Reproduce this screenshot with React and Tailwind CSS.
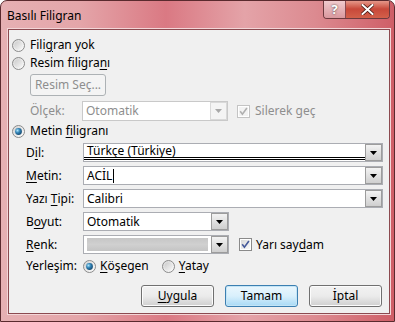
import React from 'react';

const font = { fontFamily: '"Noto Sans", "Open Sans", sans-serif' };

// mnemonic underline
const U = ({ children }) => <span className="underline underline-offset-[2px] decoration-[1px]">{children}</span>;

const Radio = ({ checked }) => (
  <svg width="13" height="13" viewBox="0 0 13 13" className="shrink-0">
    <defs>
      <linearGradient id="rOuter" x1="0" y1="0" x2="1" y2="1">
        <stop offset="0" stopColor="#d6d6d6" />
        <stop offset="1" stopColor="#ffffff" />
      </linearGradient>
      <linearGradient id="rInner" x1="0" y1="0" x2="1" y2="1">
        <stop offset="0" stopColor="#cbcbcb" />
        <stop offset="1" stopColor="#f7f7f7" />
      </linearGradient>
      <radialGradient id="rDot" cx="0.35" cy="0.35" r="0.7">
        <stop offset="0" stopColor="#a9e4fb" />
        <stop offset="0.5" stopColor="#2f80b3" />
        <stop offset="1" stopColor="#174a70" />
      </radialGradient>
    </defs>
    <circle cx="6.5" cy="6.5" r="6" fill="url(#rOuter)" stroke="#8a8a8a" />
    <circle cx="6.5" cy="6.5" r="4.2" fill="url(#rInner)" />
    {checked && <circle cx="6.5" cy="6.5" r="3.4" fill="url(#rDot)" />}
  </svg>
);

const Check = ({ disabled }) => (
  <svg width="13" height="13" viewBox="0 0 13 13" className="shrink-0">
    <defs>
      <linearGradient id="cInner" x1="0" y1="0" x2="1" y2="1">
        <stop offset="0" stopColor="#d8d8d8" />
        <stop offset="1" stopColor="#f9f9f9" />
      </linearGradient>
    </defs>
    <rect x="0.5" y="0.5" width="12" height="12" fill="#fff" stroke={disabled ? '#c4c4c4' : '#8a8a8a'} />
    <rect x="2" y="2" width="9" height="9" fill={disabled ? '#f3f3f3' : 'url(#cInner)'} />
    <path d="M3.2 6.3 L5.4 9.2 L9.9 3" fill="none" stroke={disabled ? '#b0b0b0' : '#45599a'} strokeWidth="1.6" />
  </svg>
);

const Arrow = ({ disabled }) => (
  <div
    className={`w-[17px] h-full shrink-0 flex items-center justify-center border ${
      disabled ? 'border-[#d9d9d9] bg-[#f4f4f4]' : 'border-[#9c9c9c] bg-gradient-to-b from-[#f3f3f3] to-[#cfcfcf]'
    }`}
  >
    <svg width="7" height="4" viewBox="0 0 7 4">
      <path d="M0 0 H7 L3.5 4 Z" fill={disabled ? '#a8a8a8' : '#000'} />
    </svg>
  </div>
);

const Combo = ({ width, disabled, children, underline }) => (
  <div
    className={`flex h-full bg-white border ${disabled ? 'border-[#c9c9c9] text-[#8e8e8e]' : 'border-[#abadb3]'}`}
    style={{ width }}
  >
    <div className="flex-1 min-w-0 flex flex-col">
      <div className="flex-1 flex items-center pl-[3px] leading-none">{children}</div>
      {underline && <div className="h-[3px] border-b-[3px] border-double border-black mb-[1px]" />}
    </div>
    <Arrow disabled={disabled} />
  </div>
);

const Field = ({ label, children }) => (
  <div className="flex items-center h-[19px]">
    <div className="w-[74px] pl-[17px] shrink-0 whitespace-nowrap">{label}</div>
    {children}
  </div>
);

const Button = ({ children, primary }) => (
  <div
    className={`w-[73px] h-[22px] rounded-[3px] flex items-center justify-center border ${
      primary
        ? 'border-[#3c7fb1] bg-gradient-to-b from-[#eaf6fd] via-[#d9f0fc] to-[#a7d9f5] shadow-[inset_0_0_0_1px_#c4e5f6]'
        : 'border-[#707070] bg-gradient-to-b from-[#f2f2f2] via-[#ebebeb] to-[#cfcfcf] shadow-[inset_0_0_0_1px_#fcfcfc]'
    }`}
  >
    {children}
  </div>
);

export default function App() {
  return (
    <div
      className="w-[395px] h-[322px] flex flex-col rounded-t-[7px] border border-[#5a2a2e] overflow-hidden text-[12px] text-black bg-[linear-gradient(to_right,#e6b0b3_0%,#e4a5a9_20%,#da7983_42%,#e4a3a8_62%,#dc8a90_80%,#cf5e67_100%)]"
      style={font}
    >
      {/* title bar */}
      <div className="h-[28px] shrink-0 flex justify-between pl-[6px] pr-[4px]">
        <div className="pt-[7px] leading-[15px]">Basılı Filigran</div>
        <div className="flex h-[19px] rounded-b-[4px] overflow-hidden border border-t-0 border-[#6d3a3e] mt-[-1px]">
          <div className="w-[22px] flex items-center justify-center bg-gradient-to-b from-[#f2cdd0] to-[#d9989e] border-r border-[#8a4a50] text-white font-bold text-[13px] leading-none [text-shadow:0_0_2px_#333]">
            ?
          </div>
          <div className="w-[43px] flex items-center justify-center bg-gradient-to-b from-[#e8a093] via-[#c8483a] to-[#d2604a]">
            <svg width="13" height="11" viewBox="0 0 13 11">
              <path d="M1.5 1 L11.5 10 M11.5 1 L1.5 10" stroke="#4a1a14" strokeWidth="3.6" strokeLinecap="square" />
              <path d="M1.5 1 L11.5 10 M11.5 1 L1.5 10" stroke="#fff" strokeWidth="2" strokeLinecap="square" />
            </svg>
          </div>
        </div>
      </div>

      {/* client area */}
      <div className="ml-[7px] mr-[4px] w-[382px] h-[285px] bg-[#f0f0f0] border border-[#8c4a50] shadow-[0_0_0_1px_#f3d6d8] flex flex-col pt-[6px]">
        <div className="flex items-center h-[18px] pl-[3px] gap-[5px]">
          <Radio />
          <span>Fili<U>g</U>ran yok</span>
        </div>
        <div className="flex items-center h-[18px] pl-[3px] gap-[5px]">
          <Radio />
          <span>Resim filigra<U>n</U>ı</span>
        </div>
        <div className="mt-[2px] ml-[21px] w-[76px] h-[22px] rounded-[3px] border border-[#adb2b5] bg-[#f4f4f4] flex items-center justify-center text-[#8e8e8e]">
          Resim Seç...
        </div>
        <div className="mt-[5px] h-[20px] flex items-center text-[#8e8e8e]">
          <div className="w-[73px] pl-[21px] shrink-0">Ölçek:</div>
          <Combo width={146} disabled>Otomatik</Combo>
          <div className="flex items-center gap-[5px] ml-[9px]">
            <Check disabled />
            <span>Silerek geç</span>
          </div>
        </div>
        <div className="mt-[1px] flex items-center h-[18px] pl-[3px] gap-[5px]">
          <Radio checked />
          <span>Metin <U>fi</U>ligranı</span>
        </div>

        <div className="mt-[3px] flex flex-col gap-[4px]">
          <Field label={<span>D<U>i</U>l:</span>}>
            <Combo width={300} underline>Türkçe (Türkiye)</Combo>
          </Field>
          <Field label={<span><U>M</U>etin:</span>}>
            <Combo width={300}>
              ACİL<span className="inline-block w-[1px] h-[14px] bg-black ml-[1px]" />
            </Combo>
          </Field>
          <Field label={<span>Yazı <U>T</U>ipi:</span>}>
            <Combo width={300}>Calibri</Combo>
          </Field>
          <Field label={<span>B<U>o</U>yut:</span>}>
            <Combo width={146}>Otomatik</Combo>
          </Field>
          <Field label={<span><U>R</U>enk:</span>}>
            <Combo width={146}>
              <div className="w-full h-[13px] mr-[3px] bg-gradient-to-b from-[#c6c6c6] via-[#d0d0d0] to-[#c4c4c4]" />
            </Combo>
            <div className="flex items-center gap-[4px] ml-[10px]">
              <Check />
              <span>Yarı say<U>d</U>am</span>
            </div>
          </Field>
        </div>

        <div className="mt-[3px] h-[18px] flex items-center">
          <div className="w-[74px] pl-[17px] shrink-0">Yerleşim:</div>
          <div className="flex items-center gap-[4px]">
            <Radio checked />
            <span><U>K</U>öşegen</span>
          </div>
          <div className="flex items-center gap-[4px] ml-[13px]">
            <Radio />
            <span><U>Y</U>atay</span>
          </div>
        </div>

        <div className="mt-[10px] flex justify-end gap-[11px] pr-[7px]">
          <Button><span><U>U</U>ygula</span></Button>
          <Button primary>Tamam</Button>
          <Button><span>İptal</span></Button>
        </div>
      </div>
    </div>
  );
}
